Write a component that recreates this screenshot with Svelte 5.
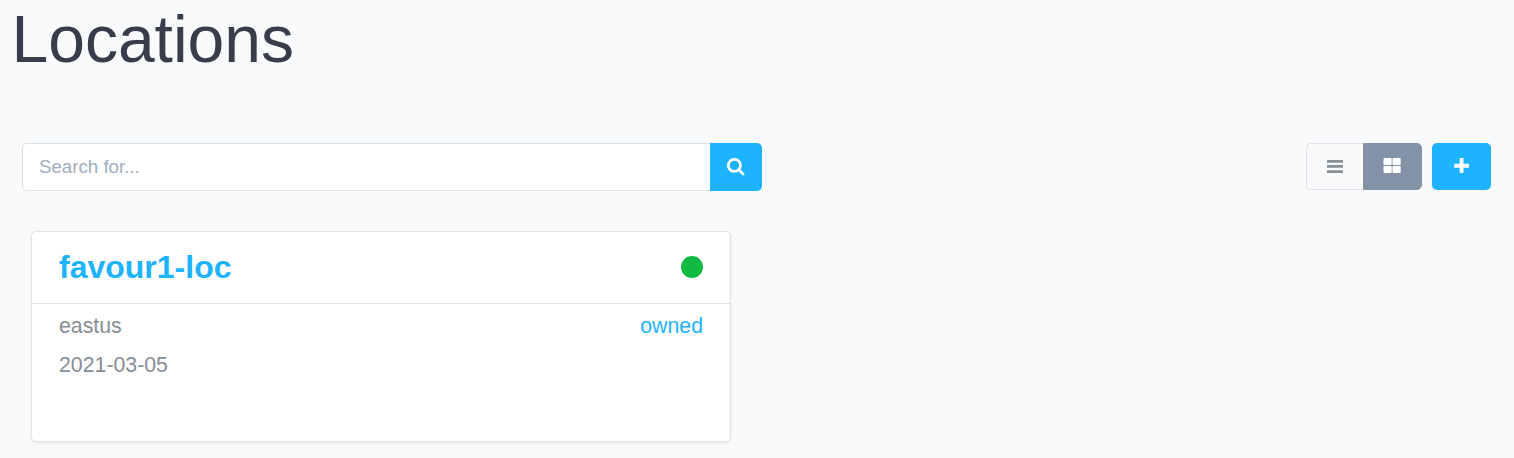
<script>
  const locations = [{ name: 'favour1-loc', region: 'eastus', date: '2021-03-05', access: 'owned' }];
  let query = $state('');
  let view = $state('grid');
</script>

<main>
  <h1>Locations</h1>
  <div class="toolbar">
    <div class="search">
      <input type="text" placeholder="Search for..." bind:value={query} />
      <button class="primary find" aria-label="Search">
        <svg width="17.500" height="17.500" viewBox="0 0 1664 1664"><path fill="#fff" d="M1152 704q0-185-131.500-316.500T704 256 387.500 387.500 256 704t131.500 316.500T704 1152t316.500-131.500T1152 704zm512 832q0 52-38 90t-90 38q-54 0-90-38l-343-342q-179 124-399 124-143 0-273.500-55.500t-225-150-150-225T0 704t55.500-273.500 150-225 225-150T704 0t273.500 55.500 225 150 150 225T1408 704q0 220-124 399l343 343q37 37 37 90z"/></svg>
      </button>
    </div>
    <div class="actions">
      <div class="views">
        <button class="list" class:active={view === 'list'} onclick={() => (view = 'list')} aria-label="List view">
          <svg width="16" height="13" viewBox="0 0 16 13" fill="currentColor"><rect width="16" height="2.700" rx=".5"/><rect y="5.100" width="16" height="2.700" rx=".5"/><rect y="10.300" width="16" height="2.700" rx=".5"/></svg>
        </button>
        <button class="grid" class:active={view === 'grid'} onclick={() => (view = 'grid')} aria-label="Grid view">
          <svg width="18" height="15" viewBox="0 0 18 15" fill="currentColor"><rect x=".5" width="8.200" height="7" rx="1"/><rect x="9.500" width="8.200" height="7" rx="1"/><rect x=".5" y="8" width="8.200" height="7" rx="1"/><rect x="9.500" y="8" width="8.200" height="7" rx="1"/></svg>
        </button>
      </div>
      <button class="primary add" aria-label="Add location">
        <svg width="15" height="15" viewBox="0 0 15 15"><path fill="#fff" d="M6.200 0h2.800q.5 0 .5.500V5.700h5q.5 0 .5.500v3q0 .5-.5.500h-5v4.800q0 .5-.5.500H6.200q-.5 0-.5-.5V9.700H.7q-.5 0-.5-.5v-3q0-.5.500-.5h5V.5Q5.700 0 6.200 0z"/></svg>
      </button>
    </div>
  </div>
  {#each locations as loc}
    <article>
      <header><h2>{loc.name}</h2><span class="status"></span></header>
      <div class="body">
        <div class="row"><span>{loc.region}</span><a href="#location">{loc.access}</a></div>
        <div class="row"><span>{loc.date}</span></div>
      </div>
    </article>
  {/each}
</main>

<style>
  :global(body) { margin: 0; background: #f9fafc; }
  main { box-sizing: border-box; height: 458px; overflow: hidden; font-family: "Liberation Sans", Arial, sans-serif; color: #868e96; }
  h1 { margin: 0; padding: 0 0 0 11.500px; box-sizing: border-box; height: 143px; font-size: 66px; font-weight: 400; line-height: 78px; color: #373d4b; }
  .toolbar { display: flex; justify-content: space-between; padding: 0 23px 0 22px; height: 48px; }
  .search { display: flex; width: 740px; }
  input { box-sizing: border-box; flex: 1; min-width: 0; height: 48px; padding: 0 16px; border: 1px solid #dbe0e5; border-right: 0; border-radius: 5px 0 0 5px; background: #fff; font: 18.700px "Liberation Sans", Arial, sans-serif; color: #495057; outline: 0; }
  input::placeholder { color: #a1afc0; opacity: 1; }
  button { display: flex; align-items: center; justify-content: center; box-sizing: border-box; padding: 0; border: 0; }
  .primary { background: #1eb3ff; }
  .find { width: 52px; height: 48px; border-radius: 0 5px 5px 0; }
  .actions { display: flex; gap: 10px; height: 47px; }
  .views { display: flex; }
  .views button { border: 1px solid #dfe2e6; background: #f9fafc; color: #868e96; }
  .views .list { width: 57px; border-right: 0; border-radius: 5px 0 0 5px; }
  .views .grid { width: 59px; border-radius: 0 5px 5px 0; padding: 0 1px 2px 0; }
  .views .active { background: #8492a6; border-color: #8492a6; color: #fff; }
  .add { width: 59px; border-radius: 5px; padding-bottom: 2px; }
  article { box-sizing: border-box; width: 700px; height: 211px; margin: 40px 0 0 31px; border: 1px solid #e1e3e5; border-radius: 5px; background: #fff; box-shadow: 0 1px 3px rgba(0,0,0,.08); }
  header { display: flex; justify-content: space-between; align-items: center; box-sizing: border-box; height: 72px; padding: 0 27px 2px; border-bottom: 1px solid #dfe2e6; }
  h2 { margin: 0; font-size: 32px; line-height: 38px; color: #1eb3ff; }
  .status { width: 22px; height: 22px; border-radius: 50%; background: #0fbb40; }
  .body { padding: 3px 27px; }
  .row { display: flex; justify-content: space-between; height: 39px; line-height: 39px; font-size: 21.300px; }
  a { color: #1eb3ff; text-decoration: none; }
</style>
